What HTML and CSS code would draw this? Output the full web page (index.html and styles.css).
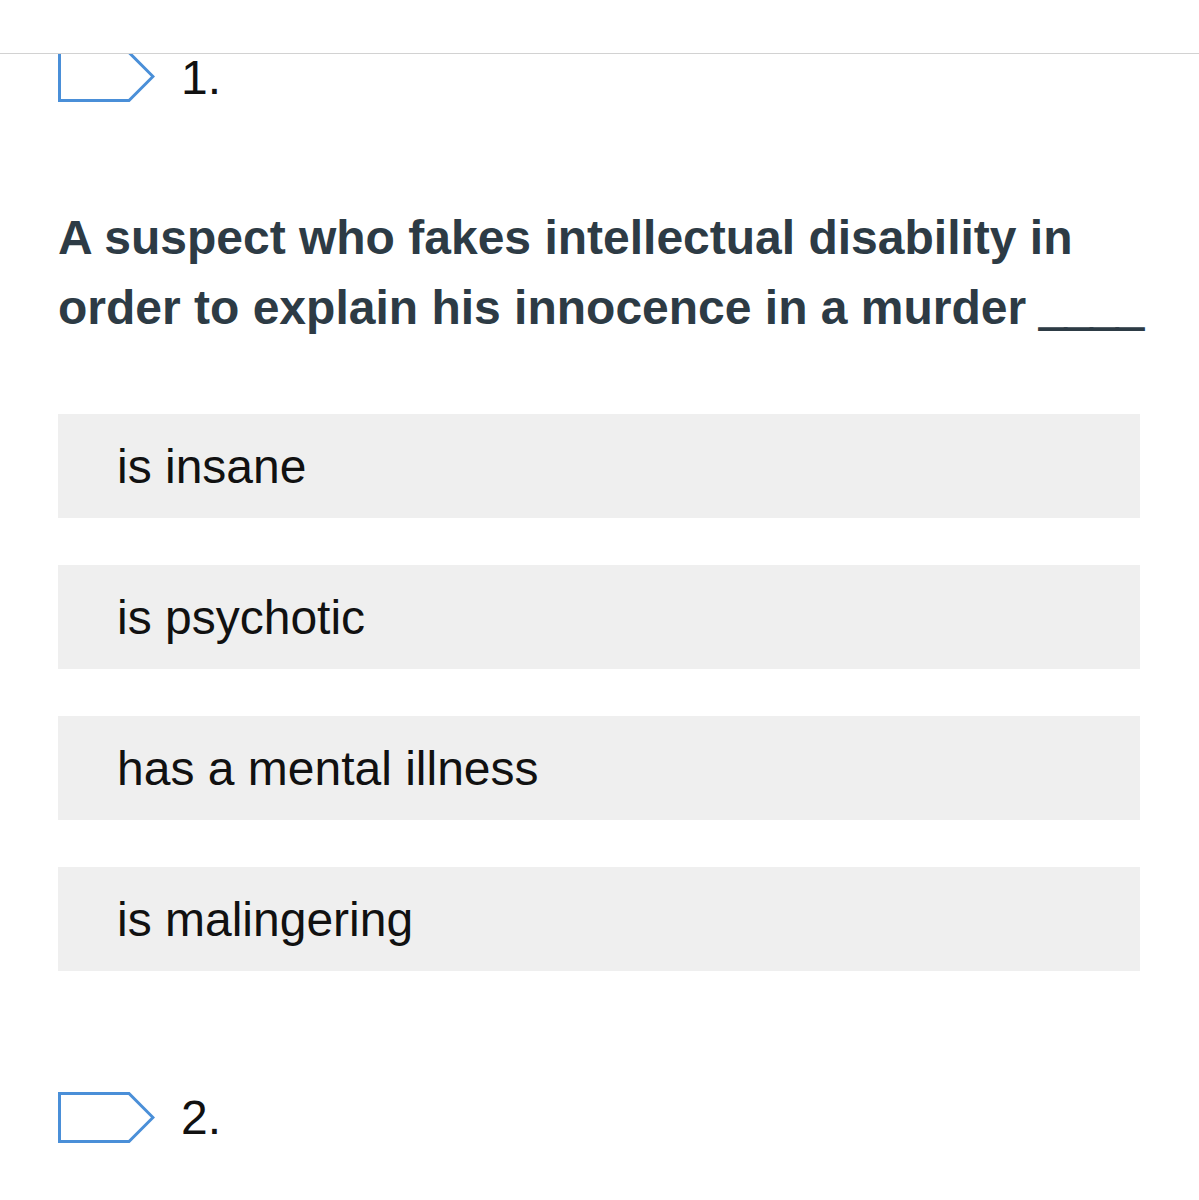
FILE: index.html
```html
<!DOCTYPE html>
<html lang="en">
<head>
<meta charset="utf-8">
<title>Quiz</title>
<link rel="stylesheet" href="styles.css">
</head>
<body>
<div class="header"></div>
<main class="main">
  <section class="question">
    <div class="qhead first">
      <svg class="flag" width="97" height="48" viewBox="0 3 97 48"><path d="M1.5 1.5 H71 L95 25.5 L71 49.5 H1.5 Z" fill="none" stroke="#4a8fd8" stroke-width="3" stroke-linejoin="miter"/></svg>
      <span class="qnum">1.</span>
    </div>
    <p class="qtext">A suspect who fakes intellectual disability in order to explain his innocence in a murder <span class="blank">____</span></p>
    <ul class="answers">
      <li class="answer">is insane</li>
      <li class="answer">is psychotic</li>
      <li class="answer">has a mental illness</li>
      <li class="answer">is malingering</li>
    </ul>
  </section>
  <section class="question">
    <div class="qhead second">
      <svg class="flag" width="97" height="51" viewBox="0 0 97 51"><path d="M1.5 1.5 H71 L95 25.5 L71 49.5 H1.5 Z" fill="none" stroke="#4a8fd8" stroke-width="3" stroke-linejoin="miter"/></svg>
      <span class="qnum">2.</span>
    </div>
  </section>
</main>
</body>
</html>
```
FILE: styles.css
```css
html, body {
  margin: 0;
  padding: 0;
  background: #ffffff;
}
body {
  font-family: "Liberation Sans", Arial, sans-serif;
  color: #000;
}
.header {
  height: 53px;
  border-bottom: 1px solid #d2d2d2;
  background: #fff;
}
.main {
  padding: 0 59px 0 58px;
}
.qhead {
  display: flex;
  align-items: center;
  gap: 26px;
  height: 51px;
}
.qhead.first {
  height: 48px;
}
.qhead.second {
  margin-top: 121px;
}
.flag {
  display: block;
  flex: none;
}
.qnum {
  font-size: 48px;
  line-height: 48px;
  color: #111;
}
.qtext {
  margin: 101px 0 0 0;
  width: 1100px;
  font-size: 48px;
  line-height: 70px;
  font-weight: 700;
  color: #2d3b45;
}
.blank {
  -webkit-text-stroke: 2px #2d3b45;
  letter-spacing: -1px;
}
.answers {
  list-style: none;
  margin: 71px 0 0 0;
  padding: 0;
  display: flex;
  flex-direction: column;
  gap: 47px;
}
.answer {
  height: 104px;
  display: flex;
  align-items: center;
  padding-left: 59px;
  background: #efefef;
  font-size: 48px;
  color: #111;
}
```
